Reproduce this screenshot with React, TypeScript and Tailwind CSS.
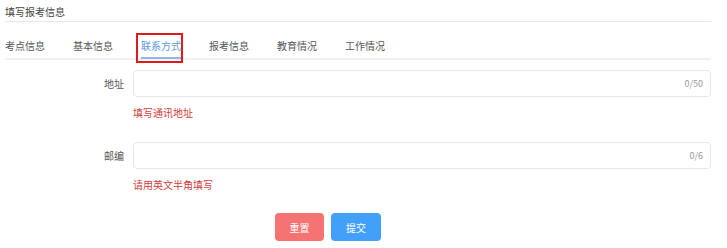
import React from 'react';

const tabs = ['考点信息', '基本信息', '联系方式', '报考信息', '教育情况', '工作情况'];

const fields = [
  { label: '地址', max: 50, hint: '填写通讯地址' },
  { label: '邮编', max: 6, hint: '请用英文半角填写' },
];

export default function App() {
  return (
    <div
      className="w-[727px] h-[248px] bg-white pl-[5px] pr-[16px] text-[#606266] overflow-hidden"
      style={{ fontFamily: '"Noto Sans CJK SC", "Noto Sans", sans-serif' }}
    >
      <div className="h-[22px] pt-[3px] text-[10px] leading-[18px] text-[#444] border-b border-[#e8e8e8]">
        填写报考信息
      </div>

      <div className="flex gap-[28px] h-[38px] border-b-2 border-[#eef0f3]">
        {tabs.map((t, i) => {
          const active = i === 2;
          return (
            <div key={t} className="relative h-[36px]">
              <div
                className={`pt-[16px] text-[10px] leading-[16px] ${
                  active ? 'text-[#5a9be0]' : 'text-[#555]'
                }`}
              >
                {t}
              </div>
              {active && <div className="absolute left-0 right-0 top-[35px] h-[2px] bg-[#8fb8e6]" />}
              {active && (
                <div className="absolute -left-[5px] w-[47px] top-[11px] h-[30px] border-2 border-[#e01a1a]" />
              )}
            </div>
          );
        })}
      </div>

      <div className="mt-[10px]">
        {fields.map((f, i) => (
          <div key={f.label} className={i > 0 ? 'mt-[20px]' : ''}>
            <div className="flex items-center">
              <div className="w-[128px] pr-[9px] text-right text-[10px] text-[#555]">{f.label}</div>
              <div className="flex-1 h-[27px] border border-[#e4e7ed] rounded-[4px] flex items-center justify-end pr-[7px]">
                <span className="text-[9px] text-[#999]">0/{f.max}</span>
              </div>
            </div>
            <div className="pl-[128px] mt-[7px] h-[18px] text-[10px] leading-[18px] text-[#d23c3c]">{f.hint}</div>
          </div>
        ))}
      </div>

      <div className="flex gap-[7px] mt-[19px] ml-[270px]">
        <button className="w-[49px] h-[28px] rounded-[4px] bg-[#f57373] text-white text-[10px]">重置</button>
        <button className="w-[50px] h-[28px] rounded-[4px] bg-[#42a0fb] text-white text-[10px]">提交</button>
      </div>
    </div>
  );
}
